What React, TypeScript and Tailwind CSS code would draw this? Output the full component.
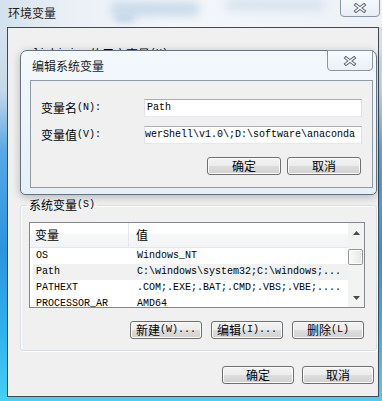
import React from "react";

const cjk = "font-['Noto_Sans_CJK_SC',sans-serif] text-[12px] leading-[12px]";
const mono = "font-['Liberation_Mono','Noto_Sans_CJK_SC',monospace] text-[10px] leading-[12px]";
const btn =
  "flex h-[18px] items-center justify-center rounded-[3px] border border-[#707070] bg-[linear-gradient(#f3f3f3_0%,#ececec_50%,#dedede_50%,#d1d1d1_100%)] shadow-[inset_0_0_0_1px_#fbfbfb] text-black";

function CloseX() {
  return (
    <svg width="14" height="10" viewBox="0 0 14 10">
      <path d="M3 2 L11 8 M11 2 L3 8" stroke="#5b6470" strokeWidth="3.4" strokeLinecap="square" fill="none" />
      <path d="M3 2 L11 8 M11 2 L3 8" stroke="#ffffff" strokeWidth="1.4" strokeLinecap="square" fill="none" />
    </svg>
  );
}

function Label({ zh, en }: { zh: string; en: string }) {
  return (
    <span className="inline-flex items-center whitespace-nowrap">
      <span className={cjk}>{zh}</span>
      <span className={mono}>{en}</span>
    </span>
  );
}

const rows = [
  { name: "OS", value: "Windows_NT", hi: false },
  { name: "Path", value: "C:\\windows\\system32;C:\\windows;...", hi: true },
  { name: "PATHEXT", value: ".COM;.EXE;.BAT;.CMD;.VBS;.VBE;....", hi: false },
  { name: "PROCESSOR_AR", value: "AMD64", hi: false },
];

export default function App() {
  return (
    <div className="relative h-[401px] w-[382px] overflow-hidden bg-[linear-gradient(to_bottom,#dce7f0_0px,#c6d9e9_90px,#5aa8e4_150px,#2c94de_250px,#2fb2ec_330px,#48d0f4_401px)] text-black">
      {/* title bar */}
      <div className="relative flex h-[27px] items-start overflow-hidden bg-[linear-gradient(to_right,#d2e1ee_0px,#e8eff6_60px,#f4f7fa_160px,#edf2f7_382px)] pl-[8px] pt-[7px]">
        <div className="absolute left-[110px] top-[2px] h-[14px] w-[90px] rounded-full bg-[#c9daea] blur-[5px]" />
        <div className="absolute left-[225px] top-[0px] h-[10px] w-[100px] rounded-full bg-[#d3e1ee] blur-[5px]" />
        <div className="absolute left-[115px] top-[14px] h-[8px] w-[20px] rounded-full bg-[#c2d5e8] blur-[3px]" />
        <span className={`relative ${cjk} text-[#1b1b1b]`}>环境变量</span>
        <div className="absolute right-[2px] top-[-1px] flex h-[18px] w-[40px] items-center justify-center rounded-b-[4px] border border-[#8a96a3] bg-[linear-gradient(#f6f9fb,#e7eef4)]">
          <CloseX />
        </div>
      </div>

      {/* outer client */}
      <div className="ml-[7px] h-[370px] w-[372px] border border-[#3f4a56] bg-[#f0f0f0]">
        <div className="ml-[25px] mt-[20px] flex h-[12px] items-center whitespace-nowrap">
          <span className={mono}>lizhiqi</span>
          <span className={`${cjk} ml-[15px]`}>的用户变量</span>
          <span className={mono}>(U)</span>
        </div>
        <div className="h-[139px]" />

        <fieldset className="ml-[12px] w-[357px] rounded-[3px] border border-[#d5dfe5] shadow-[inset_1px_1px_0_#ffffff,1px_1px_0_#ffffff]">
          <legend className="ml-[6px] flex h-[12px] items-center px-[2px] text-[12px] leading-[12px]">
            <Label zh="系统变量" en="(S)" />
          </legend>

          <div className="ml-[8px] mt-[11px] flex h-[86px] w-[336px] overflow-hidden border border-[#828790] bg-white">
            <div className="flex-1 overflow-hidden">
              <div className="flex h-[25px] border-b border-[#e3e6ea] bg-[linear-gradient(#ffffff_0%,#ffffff_45%,#f6f7f9_45%,#f3f4f6_100%)]">
                <div className="flex w-[99px] items-center border-r border-[#e3e6ea] pl-[5px]">
                  <span className={cjk}>变量</span>
                </div>
                <div className="flex items-center pl-[7px]">
                  <span className={cjk}>值</span>
                </div>
              </div>
              {rows.map((r) => (
                <div
                  key={r.name}
                  className={`ml-[3px] flex h-[16px] items-center whitespace-nowrap pl-[3px] ${r.hi ? "bg-[#f1f1f1]" : ""}`}
                >
                  <span className={`${mono} w-[101px] overflow-hidden`}>{r.name}</span>
                  <span className={mono}>{r.value}</span>
                </div>
              ))}
            </div>
            {/* scrollbar */}
            <div className="flex w-[16px] flex-col items-center bg-[#f3f3f3]">
              <div className="flex h-[17px] w-full items-center justify-center pt-[2px]">
                <svg width="7" height="4" viewBox="0 0 7 4">
                  <path d="M0 4 L3.5 0 L7 4 Z" fill="#4a4a4a" />
                </svg>
              </div>
              <div className="mt-[9px] h-[16px] w-[15px] self-start rounded-[2px] border border-[#979797] bg-[linear-gradient(to_right,#fbfbfb,#e6e6e6)] shadow-[inset_0_0_0_1px_#ffffff]" />
              <div className="mt-auto flex h-[17px] w-full items-center justify-center pb-[2px]">
                <svg width="7" height="4" viewBox="0 0 7 4">
                  <path d="M0 0 L7 0 L3.5 4 Z" fill="#4a4a4a" />
                </svg>
              </div>
            </div>
          </div>

          <div className="mb-[11px] mt-[13px] flex justify-end gap-[9px] pr-[12px]">
            <div className={`${btn} w-[72px]`}>
              <Label zh="新建" en="(W)..." />
            </div>
            <div className={`${btn} w-[72px]`}>
              <Label zh="编辑" en="(I)..." />
            </div>
            <div className={`${btn} w-[72px]`}>
              <Label zh="删除" en="(L)" />
            </div>
          </div>
        </fieldset>

        <div className="mt-[15px] flex justify-end gap-[8px] pr-[4px]">
          <div className={`${btn} w-[72px]`}>
            <span className={cjk}>确定</span>
          </div>
          <div className={`${btn} w-[72px]`}>
            <span className={cjk}>取消</span>
          </div>
        </div>
      </div>

      {/* edit dialog */}
      <div className="absolute left-[20px] top-[50px] h-[145px] w-[357px] rounded-b-[5px] rounded-t-[7px] border border-[#66727f] bg-[linear-gradient(to_bottom,#f3f8fc,#e5eff8)] shadow-[0_2px_8px_rgba(0,0,0,0.25)]">
        <div className="absolute right-[3px] top-[-1px] flex h-[21px] w-[46px] items-center justify-center rounded-b-[4px] border border-[#8a96a3] bg-[linear-gradient(#f7fbfd,#e9f1f7)]">
          <CloseX />
        </div>
        <div className="flex h-[29px] items-start pl-[11px] pt-[9px]">
          <span className={`${cjk} text-[#1b1b1b]`}>编辑系统变量</span>
        </div>
        <div className="ml-[9px] h-[108px] w-[343px] border border-[#8d9aa8] bg-[#f0f0f0] pl-[10px] pt-[18px]">
          <div className="flex items-center">
            <div className="flex w-[103px] items-center">
              <Label zh="变量名" en="(N):" />
            </div>
            <div className="flex h-[18px] w-[218px] items-center overflow-hidden border border-[#abadb3] border-b-[#e3e9ef] border-l-[#e2e3ea] border-r-[#dbdfe6] bg-white pl-[2px]">
              <span className={mono}>Path</span>
            </div>
          </div>
          <div className="mt-[9px] flex items-center">
            <div className="flex w-[103px] items-center">
              <Label zh="变量值" en="(V):" />
            </div>
            <div className="flex h-[18px] w-[218px] items-center overflow-hidden whitespace-nowrap border border-[#abadb3] border-b-[#e3e9ef] border-l-[#e2e3ea] border-r-[#dbdfe6] bg-white">
              <span className={mono}>{"werShell\\v1.0\\;D:\\software\\anaconda"}</span>
            </div>
          </div>
          <div className="mt-[13px] flex justify-end gap-[6px] pr-[11px]">
            <div className={`${btn} w-[74px]`}>
              <span className={cjk}>确定</span>
            </div>
            <div className={`${btn} w-[74px]`}>
              <span className={cjk}>取消</span>
            </div>
          </div>
        </div>
      </div>
    </div>
  );
}
